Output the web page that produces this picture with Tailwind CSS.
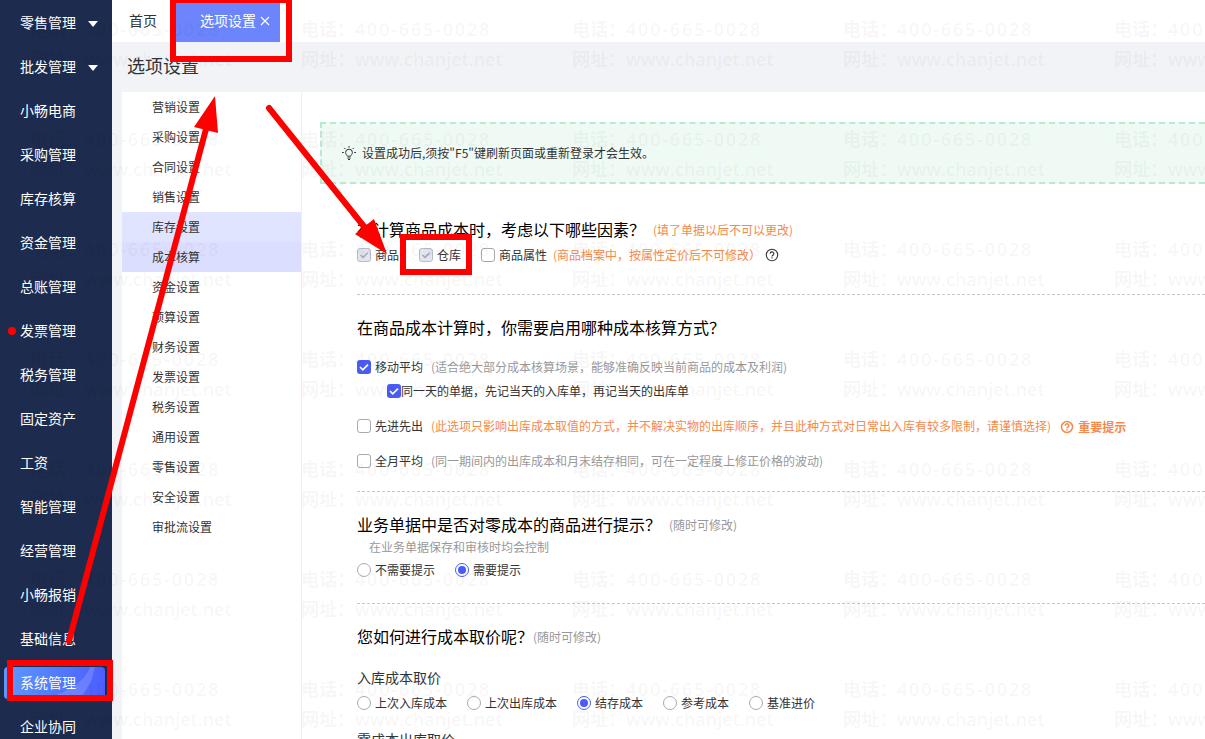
<!DOCTYPE html>
<html lang="zh-CN">
<head>
<meta charset="utf-8">
<meta name="viewport" content="width=device-width, initial-scale=1">
<title>选项设置</title>
<script src="https://cdn.jsdelivr.net/npm/@tailwindcss/browser@4"></script>
</head>
<body class="relative flex h-screen overflow-hidden bg-[#f1f3f6] font-['Noto_Sans_CJK_SC',sans-serif] text-xs text-[#333]">

<!-- Main navigation -->
<nav class="w-28 shrink-0 overflow-hidden bg-[#1d2b4e] pt-px text-sm text-white [&>a:not([aria-current])]:pb-0.5" aria-label="主菜单">
  <a href="#" class="flex h-11 items-center pl-5">零售管理<svg class="mt-1 ml-3 h-2 w-2.5" viewBox="0 0 10 8"><path d="M0 1h10L5 7z" fill="#fff"/></svg></a>
  <a href="#" class="flex h-11 items-center pl-5">批发管理<svg class="mt-1 ml-3 h-2 w-2.5" viewBox="0 0 10 8"><path d="M0 1h10L5 7z" fill="#fff"/></svg></a>
  <a href="#" class="flex h-11 items-center pl-5">小畅电商</a>
  <a href="#" class="flex h-11 items-center pl-5">采购管理</a>
  <a href="#" class="flex h-11 items-center pl-5">库存核算</a>
  <a href="#" class="flex h-11 items-center pl-5">资金管理</a>
  <a href="#" class="flex h-11 items-center pl-5">总账管理</a>
  <a href="#" class="flex h-11 items-center gap-1 pl-2"><span class="mt-0.5 size-2 rounded-full bg-[#f00]"></span>发票管理</a>
  <a href="#" class="flex h-11 items-center pl-5">税务管理</a>
  <a href="#" class="flex h-11 items-center pl-5">固定资产</a>
  <a href="#" class="flex h-11 items-center pl-5">工资</a>
  <a href="#" class="flex h-11 items-center pl-5">智能管理</a>
  <a href="#" class="flex h-11 items-center pl-5">经营管理</a>
  <a href="#" class="flex h-11 items-center pl-5">小畅报销</a>
  <a href="#" class="flex h-11 items-center pl-5">基础信息</a>
  <a href="#" class="flex h-11 items-center pr-[7px] pl-1" aria-current="page">
    <span class="relative flex h-8 flex-1 items-center overflow-hidden rounded-sm bg-linear-to-r from-[#5d97fc] to-[#4d5dff] pb-0.5 pl-4">
      <svg class="absolute inset-0 size-full" viewBox="0 0 101 32" preserveAspectRatio="none"><path d="M91 0C88 14 84 24 74 32H40C62 26 80 16 86 0z" fill="#fff" fill-opacity=".15"/></svg>
      <span class="relative">系统管理</span>
    </span>
  </a>
  <a href="#" class="flex h-11 items-center pl-5">企业协同</a>
</nav>

<div class="flex min-w-0 flex-1 flex-col">
  <!-- Page tabs -->
  <div class="flex h-[42px] shrink-0 bg-white pl-[17px] text-sm">
    <a href="#" class="flex items-center pr-[19px] pb-0.5">首页</a>
    <div class="flex items-center gap-1 bg-[#6c85fc] pr-2.5 pl-6 text-white">
      <a href="#" class="pb-0.5">选项设置</a>
      <button type="button" aria-label="关闭"><svg class="size-2.5" viewBox="0 0 10 10"><path d="M1 1l8 8M9 1L1 9" stroke="#fff" stroke-width="1.1"/></svg></button>
    </div>
  </div>
  <h1 class="flex h-[50px] shrink-0 items-center pb-1 pl-[15px] text-lg">选项设置</h1>

  <div class="ml-2.5 flex min-h-0 flex-1 overflow-hidden bg-white">
    <!-- Settings categories -->
    <nav class="w-[180px] shrink-0 border-r border-[#eceef1]" aria-label="设置分类">
      <a href="#" class="flex h-[30px] items-center pl-[30px]">营销设置</a>
      <a href="#" class="flex h-[30px] items-center pl-[30px]">采购设置</a>
      <a href="#" class="flex h-[30px] items-center pl-[30px]">合同设置</a>
      <a href="#" class="flex h-[30px] items-center pl-[30px]">销售设置</a>
      <a href="#" class="flex h-[30px] items-center bg-[#e1e4ff] pl-[30px]">库存设置</a>
      <a href="#" class="flex h-[30px] items-center bg-[#dcdeff] pl-[30px]">成本核算</a>
      <a href="#" class="flex h-[30px] items-center pl-[30px]">资金设置</a>
      <a href="#" class="flex h-[30px] items-center pl-[30px]">预算设置</a>
      <a href="#" class="flex h-[30px] items-center pl-[30px]">财务设置</a>
      <a href="#" class="flex h-[30px] items-center pl-[30px]">发票设置</a>
      <a href="#" class="flex h-[30px] items-center pl-[30px]">税务设置</a>
      <a href="#" class="flex h-[30px] items-center pl-[30px]">通用设置</a>
      <a href="#" class="flex h-[30px] items-center pl-[30px]">零售设置</a>
      <a href="#" class="flex h-[30px] items-center pl-[30px]">安全设置</a>
      <a href="#" class="flex h-[30px] items-center pl-[30px]">审批流设置</a>
    </nav>

    <main class="min-w-0 flex-1 overflow-hidden pt-[30px] whitespace-nowrap">
      <div class="ml-[18px] flex h-[62px] items-center gap-1.5 border-2 border-r-0 border-dashed border-[#b9e8d3] bg-[#effaf5] pl-5">
        <svg class="size-3.5 shrink-0" viewBox="0 0 14 14" fill="none" stroke="#333" stroke-width="1"><path d="M5.3 10.2c0-1-1.7-1.700-1.700-3.700a3.400 3.400 0 0 1 6.800 0c0 2-1.700 2.700-1.700 3.700zM5.300 12h3.400M6 13.500h2M7 0v1.600M0 6.500h1.800M12.200 6.500H14M2.200 1.900l1.100 1.100M11.800 1.900l-1.100 1.100"/></svg>
        <p>设置成功后,须按"F5"键刷新页面或重新登录才会生效。</p>
      </div>

      <section class="ml-[55px] border-b border-dashed border-[#c4c8c6] pt-[33px] pb-[27px]">
        <div class="flex h-[26px] items-center gap-2">
          <h2 class="pb-0.5 text-base text-black">在计算商品成本时，考虑以下哪些因素？</h2>
          <span class="text-[#f58a4b]">(填了单据以后不可以更改)</span>
        </div>
        <div class="flex h-6 items-center gap-5">
          <label class="flex items-center gap-1"><span class="grid"><input type="checkbox" checked disabled class="col-start-1 row-start-1 size-3.5 appearance-none rounded-[3px] border border-[#b9bcc8] bg-[#e2e5f0]"><svg class="pointer-events-none col-start-1 row-start-1 size-3.5" viewBox="0 0 14 14"><path d="M3.500 7l2.500 2.500 4.800-4.800" fill="none" stroke="#a3a7b1" stroke-width="1.500"/></svg></span>商品</label>
          <label class="flex items-center gap-1"><span class="grid"><input type="checkbox" checked disabled class="col-start-1 row-start-1 size-3.5 appearance-none rounded-[3px] border border-[#b9bcc8] bg-[#e2e5f0]"><svg class="pointer-events-none col-start-1 row-start-1 size-3.5" viewBox="0 0 14 14"><path d="M3.500 7l2.500 2.500 4.800-4.800" fill="none" stroke="#a3a7b1" stroke-width="1.500"/></svg></span>仓库</label>
          <div class="flex items-center">
            <label class="flex items-center gap-1"><input type="checkbox" class="size-3.5 appearance-none rounded-[3px] border border-[#aaa] bg-white">商品属性</label>
            <span class="ml-1.5 text-[#f58a4b]">(商品档案中，按属性定价后不可修改）</span>
            <button type="button" aria-label="帮助" class="ml-1"><svg class="size-3.5" viewBox="0 0 14 14" fill="none" stroke="#333" stroke-width="1.100"><circle cx="7" cy="7" r="5.700"/><path d="M5.200 5.700a1.800 1.800 0 1 1 2.700 1.500c-.6.4-.9.600-.9 1.200M7 9.300v1.200"/></svg></button>
          </div>
        </div>
      </section>

      <section class="ml-[55px] border-b border-dashed border-[#c4c8c6] pt-5 pb-[18px]">
        <h2 class="flex h-[26px] items-center pb-0.5 text-base text-black">在商品成本计算时，你需要启用哪种成本核算方式？</h2>
        <div class="mt-3.5 flex h-6 items-center gap-2">
          <label class="flex items-center gap-1"><span class="grid"><input type="checkbox" checked class="col-start-1 row-start-1 size-3.5 appearance-none rounded-[3px] bg-[#4a5cf5]"><svg class="pointer-events-none col-start-1 row-start-1 size-3.5" viewBox="0 0 14 14"><path d="M3 7l2.800 2.800 5.200-5.200" fill="none" stroke="#fff" stroke-width="1.700"/></svg></span>移动平均</label>
          <span class="text-[#999]">(适合绝大部分成本核算场景，能够准确反映当前商品的成本及利润)</span>
        </div>
        <div class="ml-[30px] flex h-6 items-center">
          <label class="flex items-center"><span class="grid"><input type="checkbox" checked class="col-start-1 row-start-1 size-3.5 appearance-none rounded-[3px] bg-[#4a5cf5]"><svg class="pointer-events-none col-start-1 row-start-1 size-3.5" viewBox="0 0 14 14"><path d="M3 7l2.800 2.800 5.200-5.200" fill="none" stroke="#fff" stroke-width="1.700"/></svg></span>同一天的单据，先记当天的入库单，再记当天的出库单</label>
        </div>
        <div class="mt-[11px] flex h-6 items-center gap-2">
          <label class="flex items-center gap-1"><input type="checkbox" class="size-3.5 appearance-none rounded-[3px] border border-[#aaa] bg-white">先进先出</label>
          <span class="text-[#f58a4b]">(此选项只影响出库成本取值的方式，并不解决实物的出库顺序，并且此种方式对日常出入库有较多限制，请谨慎选择)</span>
          <a href="#" class="flex items-center gap-1 pt-0.5 pl-px font-bold text-[#f58a4b]"><svg class="size-3.5" viewBox="0 0 14 14" fill="none" stroke="#f58a4b" stroke-width="1.500"><circle cx="7" cy="7" r="5.500"/><path d="M5.200 5.700a1.800 1.800 0 1 1 2.700 1.500c-.6.4-.9.600-.9 1.200M7 9.300v1.200"/></svg>重要提示</a>
        </div>
        <div class="mt-[11px] flex h-6 items-center gap-2">
          <label class="flex items-center gap-1"><input type="checkbox" class="size-3.5 appearance-none rounded-[3px] border border-[#aaa] bg-white">全月平均</label>
          <span class="text-[#999]">(同一期间内的出库成本和月末结存相同，可在一定程度上修正价格的波动)</span>
        </div>
      </section>

      <section class="ml-[55px] border-b border-dashed border-[#c4c8c6] pt-5 pb-[21px]">
        <div class="flex h-[26px] items-center gap-2">
          <h2 class="pb-0.5 text-base text-black">业务单据中是否对零成本的商品进行提示？</h2>
          <span class="text-[#999]">(随时可修改)</span>
        </div>
        <p class="pl-3 leading-[18px] text-[#999]">在业务单据保存和审核时均会控制</p>
        <div class="mt-0.5 flex h-6 items-center gap-5">
          <label class="flex items-center gap-1"><input type="radio" name="prompt" class="size-3.5 appearance-none rounded-full border border-[#aaa] bg-white">不需要提示</label>
          <label class="flex items-center gap-1"><input type="radio" name="prompt" checked class="size-3.5 appearance-none rounded-full border border-[#4a5cf5] bg-[#4a5cf5] bg-clip-content p-0.5">需要提示</label>
        </div>
      </section>

      <section class="ml-[55px] pt-5">
        <div class="flex h-[26px] items-center">
          <h2 class="pb-0.5 text-base text-black">您如何进行成本取价呢？</h2>
          <span class="text-[#999]">(随时可修改)</span>
        </div>
        <h3 class="mt-[17px] text-sm">入库成本取价</h3>
        <div class="mt-1 flex h-6 items-center gap-5">
          <label class="flex items-center gap-1"><input type="radio" name="price" class="size-3.5 appearance-none rounded-full border border-[#aaa] bg-white">上次入库成本</label>
          <label class="flex items-center gap-1"><input type="radio" name="price" class="size-3.5 appearance-none rounded-full border border-[#aaa] bg-white">上次出库成本</label>
          <label class="flex items-center gap-1"><input type="radio" name="price" checked class="size-3.5 appearance-none rounded-full border border-[#4a5cf5] bg-[#4a5cf5] bg-clip-content p-0.5">结存成本</label>
          <label class="flex items-center gap-1"><input type="radio" name="price" class="size-3.5 appearance-none rounded-full border border-[#aaa] bg-white">参考成本</label>
          <label class="flex items-center gap-1"><input type="radio" name="price" class="size-3.5 appearance-none rounded-full border border-[#aaa] bg-white">基准进价</label>
        </div>
        <h3 class="mt-3.5 text-sm">零成本出库取价</h3>
      </section>
    </main>
  </div>
</div>

<!-- Repeating watermark -->
<div id="watermark" aria-hidden="true" class="pointer-events-none absolute inset-0 grid grid-cols-[repeat(5,271px)] content-start overflow-hidden pl-[30px] font-['Open_Sans','Noto_Sans_CJK_SC',sans-serif] text-lg font-semibold whitespace-nowrap text-black/5">
  <div class="h-[110px] pt-3.5 leading-[30px]"><p>电话：<span class="tracking-widest">400-665-0028</span></p><p>网址：www.chanjet.net</p></div>
</div>
<script>
  const mark = document.getElementById('watermark');
  const tile = mark.firstElementChild;
  for (let i = 1; i < 35; i++) mark.appendChild(tile.cloneNode(true));
</script>

<!-- Tutorial annotations -->
<svg class="pointer-events-none absolute top-0 left-0" width="480" height="710" viewBox="0 0 480 710" aria-hidden="true">
  <g fill="none" stroke="#f00" stroke-width="6">
    <path d="M173 0V59H289V0"/><path d="M170 1.500H292" stroke-width="3"/>
    <rect x="403" y="237" width="66" height="35"/>
    <rect x="10" y="663" width="100" height="35"/>
    <path d="M69 641L206 129M269 108L366 229" stroke-linecap="round"/>
  </g>
  <path d="M215 96L194 127L218 133zM387 254L355 234L374 219z" fill="#f00"/>
</svg>
</body>
</html>
